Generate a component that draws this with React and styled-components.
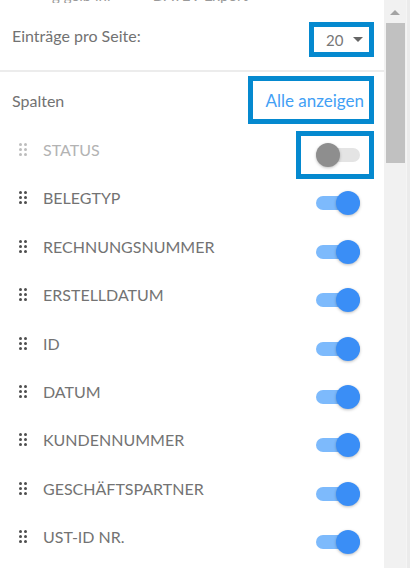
import styled, { createGlobalStyle } from "styled-components";

const GlobalStyle = createGlobalStyle`
  html, body {
    margin: 0;
    padding: 0;
    background: #ffffff;
    overflow: hidden;
  }
  body {
    font-family: Lato, "Open Sans", sans-serif;
  }
`;

const Screen = styled.div`
  display: flex;
  width: 410px;
  height: 568px;
  overflow: hidden;
`;

const Panel = styled.div`
  flex: 1;
  display: flex;
  flex-direction: column;
  background: #ffffff;
  overflow: hidden;
`;

const Behind = styled.div`
  height: 3px;
  overflow: hidden;
  padding-left: 52px;
  color: #9a9a9a;
  font-size: 15px;
  line-height: 16px;
  white-space: nowrap;
  span {
    display: block;
    margin-top: -13px;
  }
`;

const Header = styled.div`
  display: flex;
  align-items: center;
  justify-content: space-between;
  padding: 19px 10px 13px 12px;
  border-bottom: 2px solid #ececec;
`;

const Caption = styled.span`
  font-size: 16px;
  color: #727272;
  margin-bottom: ${(p) => p.$lift || 0}px;
`;

const Outline = styled.div`
  display: flex;
  align-items: center;
  box-sizing: border-box;
  border: 5px solid ${(p) => (p.$on ? "#0589cf" : "transparent")};
  background: #ffffff;
`;

const PageSize = styled(Outline)`
  width: 65px;
  height: 35px;
  padding-left: 12px;
  gap: 10px;
  font-size: 15px;
  color: #777;
`;

const Caret = styled.span`
  width: 0;
  height: 0;
  border-left: 5px solid transparent;
  border-right: 5px solid transparent;
  border-top: 5px solid #666;
`;

const SectionHead = styled.div`
  display: flex;
  align-items: center;
  justify-content: space-between;
  padding: 4px 10px 2px 12px;
`;

const ShowAll = styled(Outline)`
  height: 48px;
  padding: 0 5px 0 12px;
  font-size: 17px;
  color: #42a0f5;
`;

const Row = styled.div`
  display: flex;
  align-items: flex-start;
  height: 48.4px;
  padding: 0 10px 0 19px;
  flex-shrink: 0;
`;

const Handle = styled.span`
  display: grid;
  grid-template-columns: repeat(2, 3px);
  grid-auto-rows: 3px;
  gap: 2px;
  margin-top: 17px;
  i {
    display: block;
    border-radius: 50%;
    background: ${(p) => (p.$muted ? "#bdbdbd" : "#4e4e4e")};
  }
`;

const Label = styled.span`
  flex: 1;
  margin: 12px 0 0 16px;
  line-height: 24px;
  font-size: 16px;
  color: ${(p) => (p.$muted ? "#b3b3b3" : "#737373")};
`;

const SwitchBox = styled(Outline)`
  width: 78px;
  height: 48px;
  margin-top: 5px;
  padding-left: 15px;
`;

const Track = styled.span`
  position: relative;
  width: 44px;
  height: 14px;
  border-radius: 7px;
  background: ${(p) => (p.$checked ? "#7dbafc" : "#e4e4e4")};
`;

const Knob = styled.span`
  position: absolute;
  top: -5px;
  left: ${(p) => (p.$checked ? 20 : 0)}px;
  width: 24px;
  height: 24px;
  border-radius: 50%;
  background: ${(p) => (p.$checked ? "#3a8ef6" : "#8e8e8e")};
  box-shadow: 0 1px 3px rgba(0, 0, 0, 0.25);
`;

const Scrollbar = styled.div`
  width: 22px;
  display: flex;
  flex-direction: column;
  align-items: center;
  background: #f1f1f1;
`;

const Arrow = styled.span`
  margin-top: 10px;
  width: 0;
  height: 0;
  border-left: 5px solid transparent;
  border-right: 5px solid transparent;
  border-bottom: 5px solid #a3a3a3;
`;

const Thumb = styled.span`
  margin: 8px 1px 0 2px;
  align-self: stretch;
  height: 140px;
  background: #c1c1c1;
`;

const Edge = styled.div`
  width: 4px;
  background: #ebebeb;
  border-left: 1px solid #f5f5f5;
  box-sizing: border-box;
`;

const columns = [
  { name: "STATUS", on: false, muted: true, marked: true },
  { name: "BELEGTYP", on: true },
  { name: "RECHNUNGSNUMMER", on: true },
  { name: "ERSTELLDATUM", on: true },
  { name: "ID", on: true },
  { name: "DATUM", on: true },
  { name: "KUNDENNUMMER", on: true },
  { name: "GESCHÄFTSPARTNER", on: true },
  { name: "UST-ID NR.", on: true },
];

function ColumnRow({ name, on, muted, marked }) {
  return (
    <Row>
      <Handle $muted={muted}>
        <i /><i /><i /><i /><i /><i />
      </Handle>
      <Label $muted={muted}>{name}</Label>
      <SwitchBox $on={marked}>
        <Track $checked={on}>
          <Knob $checked={on} />
        </Track>
      </SwitchBox>
    </Row>
  );
}

export default function App() {
  return (
    <>
      <GlobalStyle />
      <Screen>
        <Panel>
          <Behind>
            <span>g gelb lhl &nbsp; &nbsp; &nbsp; &nbsp; &nbsp; DATEV Export</span>
          </Behind>
          <Header>
            <Caption $lift={9}>Einträge pro Seite:</Caption>
            <PageSize $on>
              20 <Caret />
            </PageSize>
          </Header>
          <SectionHead>
            <Caption>Spalten</Caption>
            <ShowAll $on>Alle anzeigen</ShowAll>
          </SectionHead>
          {columns.map((c) => (
            <ColumnRow key={c.name} {...c} />
          ))}
        </Panel>
        <Scrollbar>
          <Arrow />
          <Thumb />
        </Scrollbar>
        <Edge />
      </Screen>
    </>
  );
}
